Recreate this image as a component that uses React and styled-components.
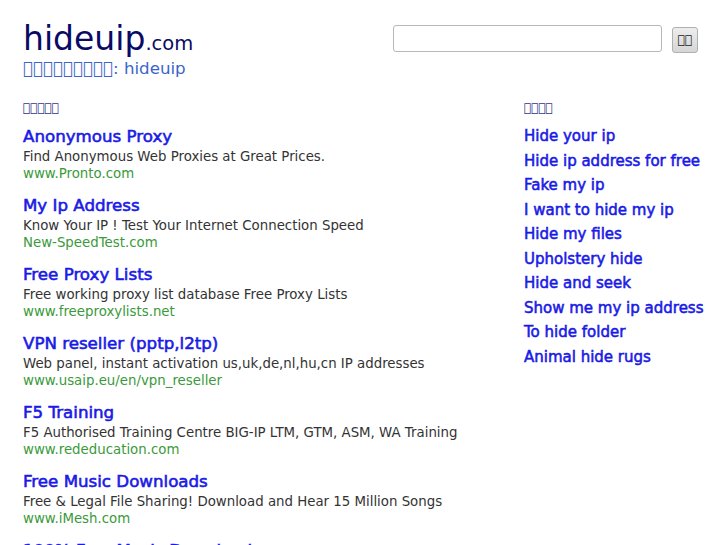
import styled, { createGlobalStyle } from 'styled-components';

const GlobalStyle = createGlobalStyle`
  html, body {
    margin: 0;
    padding: 0;
    background: #fff;
  }
  body {
    font-family: "DejaVu Sans", Verdana, sans-serif;
    font-size: 13.33px;
    color: #333;
  }
`;

const Page = styled.div`
  width: 675px;
  padding: 19px 0 0 23px;
`;

const Header = styled.div`
  display: flex;
  justify-content: space-between;
  align-items: flex-start;
`;

const Brand = styled.div`
  display: flex;
  flex-direction: column;
`;

const Logo = styled.div`
  font-size: 33px;
  color: #0a0a66;
  line-height: normal;
`;

const LogoTld = styled.span`
  font-size: 19.5px;
`;

const Tagline = styled.div`
  font-size: 16.67px;
  color: #3a66cc;
  line-height: normal;
  margin-top: 1px;
`;

const SearchForm = styled.form`
  display: flex;
  align-items: flex-start;
  gap: 10px;
  margin-top: 6px;
`;

const SearchInput = styled.input`
  box-sizing: border-box;
  width: 269px;
  height: 27px;
  border: 1px solid #b8b8b8;
  border-radius: 3px;
  background: #fff;
  outline: none;
`;

const SearchButton = styled.button`
  box-sizing: border-box;
  width: 26px;
  height: 26px;
  margin-top: 2px;
  padding: 0;
  border: 1px solid #b0b0b0;
  border-radius: 3px;
  background: linear-gradient(#ededed, #d6d6d6);
  font-family: "DejaVu Sans", sans-serif;
  font-size: 12px;
  color: #222;
`;

const Main = styled.div`
  display: grid;
  grid-template-columns: 501px auto;
  margin-top: 23px;
`;

const Heading = styled.div`
  font-size: 12px;
  font-weight: bold;
  color: #33338a;
  line-height: 14px;
  margin-bottom: ${({ $gap }) => $gap}px;
`;

const Ad = styled.div`
  margin-bottom: 13px;
`;

/* titles and related links look like a synthetic bold of the regular face */
const AdTitle = styled.a`
  display: block;
  font-size: 16.67px;
  line-height: 22px;
  color: #1a1ae6;
  -webkit-text-stroke: 0.6px #1a1ae6;
  text-decoration: none;
`;

const AdText = styled.div`
  line-height: 17px;
  color: ${({ $green }) => ($green ? '#3a9a3a' : '#333')};
  white-space: nowrap;
`;

const LinkList = styled.ul`
  list-style: none;
  margin: 0;
  padding: 0;
`;

const LinkItem = styled.li`
  font-size: 15px;
  line-height: 24.5px;
  white-space: nowrap;
`;

const Link = styled.a`
  color: #1a1ae6;
  -webkit-text-stroke: 0.55px #1a1ae6;
  text-decoration: none;
`;

const ads = [
  { title: 'Anonymous Proxy', desc: 'Find Anonymous Web Proxies at Great Prices.', url: 'www.Pronto.com' },
  { title: 'My Ip Address', desc: 'Know Your IP ! Test Your Internet Connection Speed', url: 'New-SpeedTest.com' },
  { title: 'Free Proxy Lists', desc: 'Free working proxy list database Free Proxy Lists', url: 'www.freeproxylists.net' },
  { title: 'VPN reseller (pptp,l2tp)', desc: 'Web panel, instant activation us,uk,de,nl,hu,cn IP addresses', url: 'www.usaip.eu/en/vpn_reseller' },
  { title: 'F5 Training', desc: 'F5 Authorised Training Centre BIG-IP LTM, GTM, ASM, WA Training', url: 'www.rededucation.com' },
  { title: 'Free Music Downloads', desc: 'Free & Legal File Sharing! Download and Hear 15 Million Songs', url: 'www.iMesh.com' },
  { title: '100% Free Music Downloads', desc: 'Download Unlimited Music, Movies and Games', url: 'www.music-downloads.com' },
];

const related = [
  'Hide your ip',
  'Hide ip address for free',
  'Fake my ip',
  'I want to hide my ip',
  'Hide my files',
  'Upholstery hide',
  'Hide and seek',
  'Show me my ip address',
  'To hide folder',
  'Animal hide rugs',
];

// the reference shows these labels as missing-glyph boxes
const boxes = (n) => String.fromCharCode(...Array.from({ length: n }, (_, i) => 0xe000 + i));

export default function App() {
  return (
    <>
      <GlobalStyle />
      <Page>
        <Header>
          <Brand>
            <Logo>
              hideuip<LogoTld>.com</LogoTld>
            </Logo>
            <Tagline>{boxes(9)}: hideuip</Tagline>
          </Brand>
          <SearchForm onSubmit={(e) => e.preventDefault()}>
            <SearchInput type="text" />
            <SearchButton type="submit">{boxes(2)}</SearchButton>
          </SearchForm>
        </Header>
        <Main>
          <div>
            <Heading $gap={10.5}>{boxes(5)}</Heading>
            {ads.map((ad) => (
              <Ad key={ad.title}>
                <AdTitle href="#">{ad.title}</AdTitle>
                <AdText>{ad.desc}</AdText>
                <AdText $green>{ad.url}</AdText>
              </Ad>
            ))}
          </div>
          <div>
            <Heading $gap={9}>{boxes(4)}</Heading>
            <LinkList>
              {related.map((r) => (
                <LinkItem key={r}>
                  <Link href="#">{r}</Link>
                </LinkItem>
              ))}
            </LinkList>
          </div>
        </Main>
      </Page>
    </>
  );
}
